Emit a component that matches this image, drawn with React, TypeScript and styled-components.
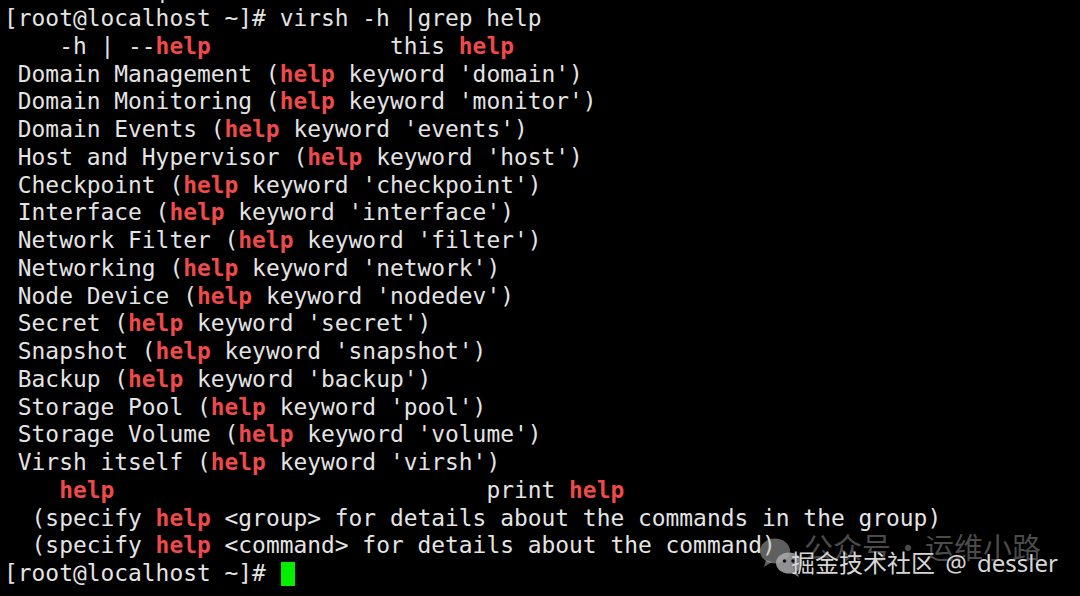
import React from "react";
import styled, { createGlobalStyle } from "styled-components";

const Global = createGlobalStyle`
  html, body { margin: 0; padding: 0; background: #000; overflow: hidden; }
  #root { width: 1080px; height: 596px; }
`;

const Screen = styled.div`
  position: relative;
  width: 1080px;
  height: 596px;
  background: #000;
  overflow: hidden;
`;

const Pre = styled.pre`
  margin: -22.75px 0 0 0;
  padding: 0 0 0 4px;
  font-family: "DejaVu Sans Mono", monospace;
  font-size: 22.9px;
  line-height: 27.75px;
  color: #e4e4e4;
  white-space: pre;
`;

const Line = styled.div`
  height: 27.75px;
  display: flex;
  align-items: center;
`;

const Hl = styled.span`
  color: #ee4a4a;
  font-weight: bold;
`;

const Cursor = styled.span`
  display: inline-block;
  width: 14px;
  height: 24px;
  background: #00f000;
  margin-left: 1px;
`;

const Watermark = styled.div`
  position: absolute;
  left: 758px;
  top: 530px;
  width: 320px;
  height: 60px;
  pointer-events: none;
`;

const Faint = styled.div`
  position: absolute;
  left: 46px;
  top: -2px;
  font-family: "Noto Sans CJK SC", sans-serif;
  font-size: 29px;
  line-height: 36px;
  color: rgba(200, 200, 200, 0.38);
  white-space: nowrap;
`;

const Dot = styled.span`
  display: inline-block;
  width: 34px;
  text-align: center;
`;

const Brand = styled.div`
  position: absolute;
  left: 33px;
  top: 16px;
  font-family: "Noto Sans", "Noto Sans CJK SC", sans-serif;
  font-size: 24px;
  line-height: 34px;
  word-spacing: 4px;
  color: #d6d6d6;
  white-space: nowrap;
  text-shadow: 0 0 2px rgba(0, 0, 0, 0.6);
`;

const Icon = styled.svg`
  position: absolute;
  left: 0;
  top: 4px;
`;

type Seg = string | { h: string };

const lines: Seg[][] = [
  ["           |"],
  ["[root@localhost ~]# virsh -h |grep help"],
  ["    -h | --", { h: "help" }, "             this ", { h: "help" }],
  [" Domain Management (", { h: "help" }, " keyword 'domain')"],
  [" Domain Monitoring (", { h: "help" }, " keyword 'monitor')"],
  [" Domain Events (", { h: "help" }, " keyword 'events')"],
  [" Host and Hypervisor (", { h: "help" }, " keyword 'host')"],
  [" Checkpoint (", { h: "help" }, " keyword 'checkpoint')"],
  [" Interface (", { h: "help" }, " keyword 'interface')"],
  [" Network Filter (", { h: "help" }, " keyword 'filter')"],
  [" Networking (", { h: "help" }, " keyword 'network')"],
  [" Node Device (", { h: "help" }, " keyword 'nodedev')"],
  [" Secret (", { h: "help" }, " keyword 'secret')"],
  [" Snapshot (", { h: "help" }, " keyword 'snapshot')"],
  [" Backup (", { h: "help" }, " keyword 'backup')"],
  [" Storage Pool (", { h: "help" }, " keyword 'pool')"],
  [" Storage Volume (", { h: "help" }, " keyword 'volume')"],
  [" Virsh itself (", { h: "help" }, " keyword 'virsh')"],
  ["    ", { h: "help" }, "                           print ", { h: "help" }],
  ["  (specify ", { h: "help" }, " <group> for details about the commands in the group)"],
  ["  (specify ", { h: "help" }, " <command> for details about the command)"],
];

export default function App() {
  return (
    <>
      <Global />
      <Screen>
        <Pre>
          {lines.map((segs, i) => (
            <Line key={i}>
              {segs.map((s, j) =>
                typeof s === "string" ? <span key={j}>{s}</span> : <Hl key={j}>{s.h}</Hl>
              )}
            </Line>
          ))}
          <Line>
            <span>[root@localhost ~]# </span>
            <Cursor />
          </Line>
        </Pre>
        <Watermark>
          <Faint>
            公众号<Dot>·</Dot>运维小路
          </Faint>
          <Icon width="48" height="48" viewBox="0 0 48 48">
            <ellipse cx="17" cy="17" rx="15" ry="12.5" fill="rgba(190,190,190,0.5)" />
            <path d="M8 26 L6 33 L14 28 Z" fill="rgba(190,190,190,0.5)" />
            <ellipse cx="31" cy="29" rx="13" ry="10.5" fill="rgba(170,170,170,0.85)" />
            <path d="M38 37 L41 43 L33 38.5 Z" fill="rgba(170,170,170,0.85)" />
            <circle cx="26.5" cy="27" r="1.8" fill="#111" />
            <circle cx="35" cy="27" r="1.8" fill="#111" />
          </Icon>
          <Brand>掘金技术社区 @ dessler</Brand>
        </Watermark>
      </Screen>
    </>
  );
}
